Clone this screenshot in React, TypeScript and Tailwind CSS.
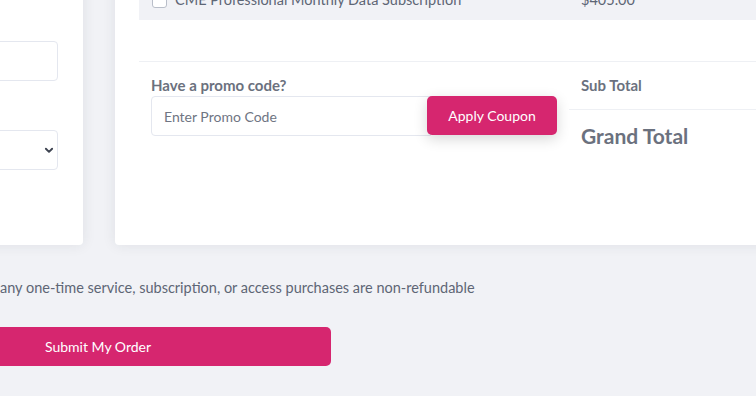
import React from "react";

const pink = "bg-[#d6266f]";

export default function App() {
  return (
    <div className="h-[396px] w-full overflow-hidden bg-[#f1f2f6] font-['Lato',sans-serif] text-[#5e6675]">
      {/* Cards row */}
      <div className="-mt-[20px] flex h-[265px] gap-[32px]">
        {/* Left card (details form) */}
        <div className="-ml-[217px] w-[300px] shrink-0 rounded bg-white pl-6 pr-[25px] pt-[61px] shadow-[0_0_14px_rgba(30,40,60,0.09)]">
          <input
            className="h-[40px] w-full rounded border border-[#e4e7ef] px-3 text-sm outline-none"
            type="text"
          />
          <div className="relative mt-[49px]">
            <select className="h-[40px] w-full appearance-none rounded border border-[#e4e7ef] bg-white px-3 text-sm outline-none">
              <option></option>
            </select>
            <svg
              className="pointer-events-none absolute right-[4px] top-[15px]"
              width="10"
              height="10"
              viewBox="0 0 16 16"
              fill="none"
              stroke="#3d4350"
              strokeWidth="3"
              strokeLinecap="round"
              strokeLinejoin="round"
            >
              <path d="M3 6l5 5 5-5" />
            </svg>
          </div>
        </div>

        {/* Right card (order summary) */}
        <div className="w-[700px] shrink-0 rounded bg-white px-6 shadow-[0_0_14px_rgba(30,40,60,0.09)]">
          <div className="flex h-[40px] items-center bg-[#f1f2f6] pl-[13px] text-[14.5px]">
            <span className="h-[15px] w-[15px] shrink-0 rounded-[3px] border border-[#b9bec9] bg-white" />
            <span className="ml-[8px] w-[406px]">CME Professional Monthly Data Subscription</span>
            <span>$405.00</span>
          </div>

          <div className="mt-[41px] flex border-t border-[#eef0f4]">
            <div className="w-[430px] px-3 pt-[14px]">
              <div className="text-[15px] font-bold leading-[18px] text-[#6b717e]">Have a promo code?</div>
              <div className="mt-[2px] flex h-[40px]">
                <input
                  className="h-full w-[280px] rounded-l border border-[#e4e7ef] px-3 text-sm outline-none placeholder:text-[#6f7583]"
                  placeholder="Enter Promo Code"
                />
                <button
                  className={`-ml-[4px] h-[39px] w-[130px] rounded-[5px] ${pink} text-sm text-white shadow-[0_4px_14px_rgba(0,0,0,0.16)]`}
                >
                  Apply Coupon
                </button>
              </div>
            </div>
            <div className="flex-1">
              <div className="flex h-[48px] items-center border-b border-[#eef0f4] px-3 text-[15px] font-bold text-[#6b717e]">
                Sub Total
              </div>
              <div className="flex h-[52px] items-center px-3 text-[21px] font-bold text-[#6b717e]">Grand Total</div>
            </div>
          </div>
        </div>
      </div>

      <p className="mt-[32px] text-[14.5px] leading-[21px]">
        any one-time service, subscription, or access purchases are non-refundable
      </p>

      <button
        className={`-ml-[134px] mt-[29px] flex h-[39px] w-[465px] items-center rounded-[5px] ${pink} pl-[179px] text-sm text-white`}
      >
        Submit My Order
      </button>
    </div>
  );
}
